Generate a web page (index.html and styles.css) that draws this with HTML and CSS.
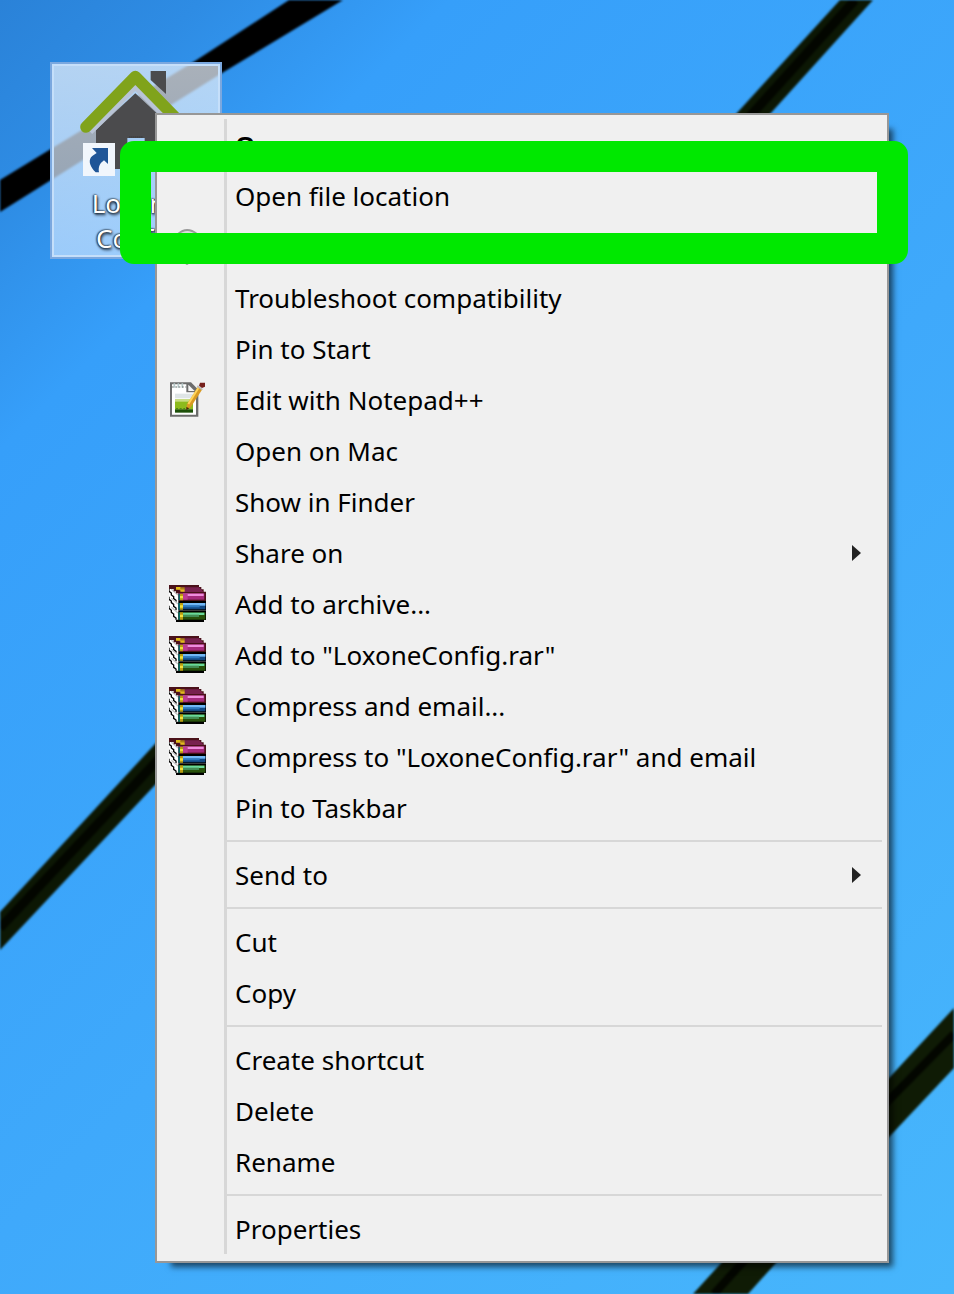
FILE: index.html
```html
<!doctype html>
<html lang="en">
<head>
  <meta charset="utf-8" />
  <meta name="viewport" content="width=device-width,initial-scale=1" />
  <title>Loxone Config</title>

  <link rel="stylesheet" href="styles.css">
</head>
<body>

  <main class="desktop">
    <!-- Wallpaper -->
    <svg class="wallpaper" viewBox="0 0 954 1294" preserveAspectRatio="none" aria-hidden="true">
      <path d="M289 0H343L222 73L0 212V180L195 61Z" fill="#000" />
      <path d="M840 0H873L770 114L155 785L0 950V912L155 744L736 114Z" fill="#0c1704" />
      <path d="M855 0L752 114L155 763L0 928" fill="none" stroke="#030600" stroke-width="9" />
      <path d="M954 1008V1068L889 1137L748 1294H693L889 1078Z" fill="#0f1b05" />
      <path d="M954 1034L889 1100L714 1294" fill="none" stroke="#030600" stroke-width="8" />
    </svg>

    <a class="shortcut" href="#">
      <svg class="house" viewBox="120 60 336 324" aria-hidden="true">
        <path d="M332 63H378V132L332 90Z" fill="#4b4b4d" />
        <path d="M168 240L286 130L404 240V357H168Z" fill="#4b4b4d" />
        <path d="M262 264H314V300H262Z" fill="#a5cdf5" />
        <path d="M268 261H308" stroke="#222" stroke-width="2" stroke-dasharray="3 3" />
        <path d="M146 241L286 102L426 241" fill="none" stroke="#b9c4d6" stroke-width="30" />
        <path d="M138 231L286 80L434 231" fill="none" stroke="#80a31b" stroke-width="35" stroke-linecap="round" stroke-linejoin="round" />
        <path d="M129 279H225V378H129Z" fill="#f1f6fc" />
        <path d="M156 294H204V342L192 331C180 340 174 350 177 367H167C152 353 144 335 153 322C158 316 164 314 170 309Z" fill="#1f5597" />
      </svg>
      <span class="shortcut-name">Loxone<br>Config</span>
    </a>

    <!-- Shared menu icons -->
    <svg class="sprite" aria-hidden="true">
      <symbol id="books" viewBox="57 30 111 111">
        <!-- page edges -->
        <path d="M57 37H85V134H79L57 110Z" fill="#fff" />
        <path d="M57 37V49L64 54V60L71 65V71L78 76V80M57 65V73L64 78V83L71 88V94L78 99V106M57 92V100L64 106V112L71 117V124L78 129V134" fill="none" stroke="#000" stroke-width="4" />
        <path d="M64 43L84 60M64 70L84 87M64 97L84 114" fill="none" stroke="#c4c4c4" stroke-width="4" />
        <!-- red book -->
        <path d="M57 30H147V36H154V43H161V50H168V78H85V55H78V49H71V42H57Z" fill="#4a1119" />
        <path d="M78 37H147L161 51H99L85 45Z" fill="#78214f" />
        <path d="M85 55H163V74H85Z" fill="#a52a7c" />
        <path d="M99 56H161V63H99Z" fill="#ee8ddd" />
        <path d="M99 56H113V74H99Z" fill="#bb3d91" />
        <path d="M78 36H92V43H104V50H91V44H78Z" fill="#e0bd18" />
        <path d="M92 37H104V42H92Z" fill="#a88012" />
        <!-- blue book -->
        <path d="M85 78H168V107H85Z" fill="#000" />
        <path d="M85 84H166V103H85Z" fill="#134a84" />
        <path d="M99 84H166V92H99Z" fill="#72b8f6" />
        <path d="M99 91H149V97H99Z" fill="#2b78bf" />
        <!-- green book -->
        <path d="M85 107H168V135H162V141H78V134H85Z" fill="#000" />
        <path d="M85 112H166V134H85Z" fill="#28520b" />
        <path d="M99 113H163V120H99Z" fill="#69d99a" />
        <path d="M99 119H147V126H99Z" fill="#438d54" />
        <!-- spine bands -->
        <path d="M85 56H90V76H85ZM85 84H90V104H85ZM85 112H90V134H85Z" fill="#0d6b66" />
        <path d="M90 56H99V76H90ZM90 84H99V104H90ZM90 112H99V134H90Z" fill="#b99c11" />
        <path d="M90 63H99V70H90ZM90 91H99V98H90ZM90 119H99V126H90Z" fill="#f2e13a" />
      </symbol>
      <symbol id="notepad" viewBox="60 34 111 111">
        <path d="M63 38H126L148 60V141H63Z" fill="#6c6c6c" />
        <path d="M69 44H112V68H141V135H69Z" fill="#fff" />
        <path d="M118 45L137 64H118Z" fill="#f4f4f4" />
        <path d="M76 41V54M88 41V54M100 41V54" stroke="#b6c8c8" stroke-width="5" />
        <path d="M69 52H112" stroke="#68716f" stroke-width="3" stroke-dasharray="5 5" />
        <path d="M78 72H132V86H78Z" fill="#dfe5e6" />
        <path d="M78 88H132V98H78Z" fill="#c9dd83" />
        <path d="M78 96H132V120H78Z" fill="#8dbb1e" />
        <path d="M78 119H132V129H78Z" fill="#1d5009" />
        <path d="M81 117H108" stroke="#4e8813" stroke-width="4" stroke-dasharray="6 5" />
        <path d="M147 51L160 59L125 113L112 119L114 104Z" fill="#d99a22" />
        <path d="M148 55L118 103" stroke="#ffd45a" stroke-width="6" />
        <path d="M112 112L121 116L112 121Z" fill="#46260b" />
        <path d="M145 49L160 60" stroke="#b9b9b9" stroke-width="5" />
        <path d="M153 39H168V51L159 55L150 48Z" fill="#76201c" />
      </symbol>
      <symbol id="badge" viewBox="0 0 37 37">
        <path d="M9 6Q18 -2 28 6V20Q28 30 18 36Q9 30 9 20Z" fill="#dcdcdc" stroke="#9a9a9a" stroke-width="2" />
      </symbol>
    </svg>

    <ul class="menu">
      <li><button class="item default"><span class="label">Open</span></button></li>
      <li><button class="item"><span class="label">Open file location</span></button></li>
      <li class="item"><svg class="icon"><use href="#badge" /></svg></li>
      <li><button class="item"><span class="label">Troubleshoot compatibility</span></button></li>
      <li><button class="item"><span class="label">Pin to Start</span></button></li>
      <li><button class="item"><svg class="icon"><use href="#notepad" /></svg><span class="label">Edit with Notepad++</span></button></li>
      <li><button class="item"><span class="label">Open on Mac</span></button></li>
      <li><button class="item"><span class="label">Show in Finder</span></button></li>
      <li><button class="item submenu"><span class="label">Share on</span></button></li>
      <li><button class="item"><svg class="icon"><use href="#books" /></svg><span class="label">Add to archive...</span></button></li>
      <li><button class="item"><svg class="icon"><use href="#books" /></svg><span class="label">Add to "LoxoneConfig.rar"</span></button></li>
      <li><button class="item"><svg class="icon"><use href="#books" /></svg><span class="label">Compress and email...</span></button></li>
      <li><button class="item"><svg class="icon"><use href="#books" /></svg><span class="label">Compress to "LoxoneConfig.rar" and email</span></button></li>
      <li><button class="item"><span class="label">Pin to Taskbar</span></button></li>
      <li class="separator"></li>
      <li><button class="item submenu"><span class="label">Send to</span></button></li>
      <li class="separator"></li>
      <li><button class="item"><span class="label">Cut</span></button></li>
      <li><button class="item"><span class="label">Copy</span></button></li>
      <li class="separator"></li>
      <li><button class="item"><span class="label">Create shortcut</span></button></li>
      <li><button class="item"><span class="label">Delete</span></button></li>
      <li><button class="item"><span class="label">Rename</span></button></li>
      <li class="separator"></li>
      <li><button class="item"><span class="label">Properties</span></button></li>
    </ul>

    <div class="highlight"></div>
  </main>

</body>
</html>
```
FILE: styles.css
```css
:root{
  --menu-bg:#f0f0f0;
  --menu-border:#979797;
  --line:#d7d7d7;
  --mark:#00e800;
  font-family: "Noto Sans", "Open Sans", sans-serif;
}
body{
  margin:0;
}

.desktop{
  position:relative;
  min-height:100vh;
  overflow:hidden;
  background:linear-gradient(135deg, #2a82d8 0%, #2e8ce4 9%, #369ffa 20%, #3fa9fb 55%, #47b6fc 100%);
}
.wallpaper{
  position:absolute;
  inset:0;
  width:100%;
  height:100%;
  filter:blur(1px);
}
.sprite{
  position:absolute;
  width:0;
  height:0;
}

/* Desktop shortcut, selected */
.shortcut{
  position:absolute;
  left:50px;
  top:62px;
  width:168px;
  display:flex;
  flex-direction:column;
  align-items:center;
  gap:8px;
  padding:6px 0 1px;
  border:2px solid #7ba8df;
  box-shadow:inset 0 0 0 2px #c5dffa;
  background:linear-gradient(rgba(226,236,248,0.75), rgba(200,226,255,0.7));
  text-decoration:none;
}
.house{
  width:112px;
  height:108px;
}
.shortcut-name{
  font-size:26px;
  line-height:35px;
  text-align:center;
  color:#fff;
  text-shadow:0 0 2px #000, 1px 2px 3px #1b2a3c, -1px 0 2px #33475c;
}

/* Context menu */
.menu{
  position:absolute;
  left:155px;
  right:65px;
  top:113px;
  margin:0;
  padding:4px 5px 7px 0;
  list-style:none;
  border:2px solid var(--menu-border);
  background:linear-gradient(var(--line), var(--line)) 67px 0 / 3px 100% no-repeat content-box, var(--menu-bg);
  box-shadow:10px 10px 6px -6px rgba(0,0,0,0.6);
}
.item{
  display:grid;
  grid-template-columns:66px 1fr auto;
  align-items:center;
  width:100%;
  height:51px;
  box-sizing:border-box;
  padding:0 21px 0 12px;
  border:0;
  background:transparent;
  font-family:inherit;
  font-size:26px;
  line-height:36px;
  text-align:left;
  color:#000;
}
.icon{
  width:37px;
  height:37px;
}
.label{
  grid-column:2;
  white-space:nowrap;
}
.default{ font-weight:600; }
.submenu::after{
  content:"";
  border-left:9px solid #222;
  border-top:8px solid transparent;
  border-bottom:8px solid transparent;
}
.separator{
  height:16px;
  margin-left:70px;
  background:linear-gradient(var(--line), var(--line)) center / 100% 2px no-repeat;
}

/* Marker around the chosen entry */
.highlight{
  position:absolute;
  left:120px;
  right:46px;
  top:141px;
  height:61px;
  border:31px solid var(--mark);
  border-radius:14px;
  pointer-events:none;
}
```
